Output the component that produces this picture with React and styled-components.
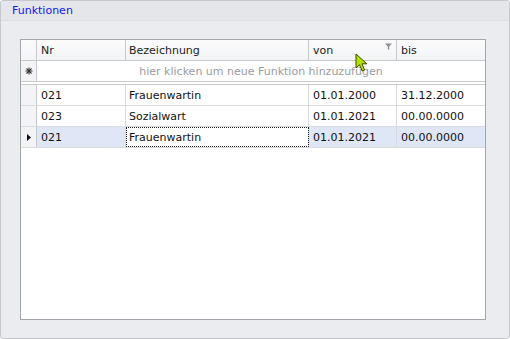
import React from "react";
import styled, { createGlobalStyle } from "styled-components";

const GlobalStyle = createGlobalStyle`
  body {
    margin: 0;
    background: #ffffff;
    font-family: "DejaVu Sans", Tahoma, sans-serif;
    font-size: 11px;
  }
`;

const GroupBox = styled.div`
  position: relative;
  box-sizing: border-box;
  width: 510px;
  height: 339px;
  border: 1px solid #c6c8ce;
  border-radius: 3px;
  background: #ebecf0;
  display: flex;
  flex-direction: column;
  overflow: hidden;
`;

const Caption = styled.div`
  height: 19px;
  padding-left: 11px;
  display: flex;
  align-items: center;
  color: #1515f0;
  background: #e4e6ea;
  border-bottom: 1px solid #dcdee3;
`;

const Body = styled.div`
  flex: 1;
  padding: 18px 23px 18px 19px;
  display: flex;
`;

const Grid = styled.div`
  flex: 1;
  box-sizing: border-box;
  border: 1px solid #a3a5ad;
  background: #ffffff;
  display: flex;
  flex-direction: column;
`;

const Row = styled.div`
  display: grid;
  grid-template-columns: 16px 89px 183px 88px 1fr;
  height: ${(p) => p.h || 21}px;
  box-sizing: border-box;
  border-bottom: 1px solid ${(p) => p.line || "#dadbe0"};
  background: ${(p) => (p.selected ? "#dfe7f7" : "#ffffff")};
`;

const HeaderRow = styled(Row)`
  background: linear-gradient(#fbfbfc, #f3f4f6);
  border-bottom: 1px solid #c8c9ce;
`;

const Cell = styled.div`
  position: relative;
  box-sizing: border-box;
  display: flex;
  align-items: center;
  padding-left: ${(p) => p.pad ?? 4}px;
  border-right: 1px solid ${(p) => p.line || "#dadbe0"};
  color: #111111;
  white-space: nowrap;
  overflow: hidden;
  ${(p) =>
    p.focused &&
    `
    background: #ffffff;
    outline: 1px dotted #222;
    outline-offset: -1px;
  `}
`;

const Indicator = styled(Cell)`
  padding-left: 0;
  justify-content: center;
  background: ${(p) => (p.header ? "transparent" : "#f4f4f6")};
  border-right: 1px solid #c8c9ce;
`;

const HeaderCell = styled(Cell)`
  border-right: 1px solid #c8c9ce;
  color: #1c1c1c;
`;

const NewRowText = styled.div`
  grid-column: 2 / 6;
  display: flex;
  align-items: center;
  justify-content: center;
  color: #9a9ba2;
`;

const Separator = styled.div`
  height: 2px;
  border-bottom: 1px solid #c8c9ce;
`;

const FilterMark = styled.svg`
  position: absolute;
  right: 4px;
  top: 3px;
`;

const Cursor = styled.svg`
  position: absolute;
  left: 354px;
  top: 52px;
  pointer-events: none;
`;

const rows = [
  { nr: "021", name: "Frauenwartin", von: "01.01.2000", bis: "31.12.2000" },
  { nr: "023", name: "Sozialwart", von: "01.01.2021", bis: "00.00.0000" },
  { nr: "021", name: "Frauenwartin", von: "01.01.2021", bis: "00.00.0000", selected: true },
];

function Asterisk() {
  return (
    <svg width="8" height="8" viewBox="0 0 8 8">
      <g stroke="#333" strokeWidth="1.1">
        <line x1="4" y1="0.5" x2="4" y2="7.5" />
        <line x1="0.5" y1="4" x2="7.5" y2="4" />
        <line x1="1.5" y1="1.5" x2="6.5" y2="6.5" />
        <line x1="6.5" y1="1.5" x2="1.5" y2="6.5" />
      </g>
    </svg>
  );
}

export default function App() {
  return (
    <>
      <GlobalStyle />
      <GroupBox>
        <Caption>Funktionen</Caption>
        <Body>
          <Grid>
            <HeaderRow>
              <Indicator header />
              <HeaderCell pad={4}>Nr</HeaderCell>
              <HeaderCell pad={3}>Bezeichnung</HeaderCell>
              <HeaderCell pad={4}>
                von
                <FilterMark width="7" height="7" viewBox="0 0 7 7">
                  <path d="M0 0.5H7L4.2 3.6V6.5H2.8V3.6Z" fill="#8a8c92" />
                </FilterMark>
              </HeaderCell>
              <HeaderCell pad={4} style={{ borderRight: "none" }}>bis</HeaderCell>
            </HeaderRow>
            <Row line="#c8c9ce">
              <Indicator>
                <Asterisk />
              </Indicator>
              <NewRowText>hier klicken um neue Funktion hinzuzufügen</NewRowText>
            </Row>
            <Separator />
            {rows.map((r, i) => (
              <Row key={i} selected={r.selected}>
                <Indicator>
                  {r.selected && (
                    <svg width="4" height="7" viewBox="0 0 4 7">
                      <path d="M0 0L4 3.5L0 7Z" fill="#111" />
                    </svg>
                  )}
                </Indicator>
                <Cell pad={4}>{r.nr}</Cell>
                <Cell pad={3} focused={r.selected}>{r.name}</Cell>
                <Cell pad={4}>{r.von}</Cell>
                <Cell pad={4} style={{ borderRight: "none" }}>{r.bis}</Cell>
              </Row>
            ))}
          </Grid>
        </Body>
        <Cursor width="14" height="20" viewBox="0 0 14 20">
          <path
            d="M1 1L1 15L4.5 11.8L7.2 18L9.6 17L7 10.8L11.8 10.8Z"
            fill="#b6e000"
            stroke="#3a4a00"
            strokeWidth="1"
            strokeLinejoin="round"
          />
        </Cursor>
      </GroupBox>
    </>
  );
}
